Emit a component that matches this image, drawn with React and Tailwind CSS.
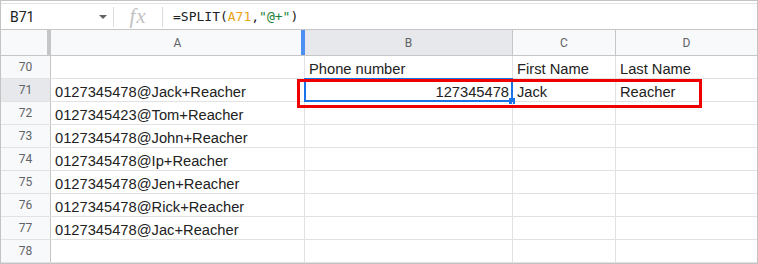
const rows = [
  { n: 70, a: '', b: 'Phone number', c: 'First Name', d: 'Last Name' },
  { n: 71, a: '0127345478@Jack+Reacher', b: '127345478', c: 'Jack', d: 'Reacher', active: true },
  { n: 72, a: '0127345423@Tom+Reacher' },
  { n: 73, a: '0127345478@John+Reacher' },
  { n: 74, a: '0127345478@Ip+Reacher' },
  { n: 75, a: '0127345478@Jen+Reacher' },
  { n: 76, a: '0127345478@Rick+Reacher' },
  { n: 77, a: '0127345478@Jac+Reacher' },
  { n: 78, a: '' },
];

const cellText = "text-[14.7px] text-[#222] font-['Liberation_Sans',Arial,sans-serif] leading-none whitespace-nowrap";

export default function App() {
  return (
    <div className="relative w-[758px] h-[264px] overflow-hidden border border-[#c3c3c3] bg-white">
      {/* Formula bar */}
      <div className="pt-[2px] border-b border-[#c4c7c5]">
        <div className="h-[26px] border-t border-[#e3e3e3] flex items-center font-['Roboto',sans-serif]">
          <div className="w-[112px] flex items-center pl-[9px] pr-[6px]">
            <span className="text-[14px] text-[#202124] leading-none">B71</span>
            <span className="ml-auto w-0 h-0 border-l-[4px] border-r-[4px] border-t-[4px] border-l-transparent border-r-transparent border-t-[#5f6368]" />
          </div>
          <div className="w-px h-[20px] bg-[#dadce0]" />
          <div className="w-[48px] flex justify-center">
            <span className="text-[21px] italic text-[#c2c2c2] leading-none font-['Liberation_Serif',serif] tracking-[1px]">fx</span>
          </div>
          <div className="w-px h-[20px] bg-[#dadce0]" />
          <div className="pl-[10px] text-[13px] leading-none text-[#202124] font-['DejaVu_Sans_Mono',monospace]">
            =SPLIT(<span className="text-[#e8a317]">A71</span>,<span className="text-[#188038]">"@+"</span>)
          </div>
        </div>
      </div>

      {/* Column headers */}
      <div className="flex h-[26px] border-b border-[#c4c7c5] bg-[#f8f9fa] text-[12px] text-[#5f6368] font-['Roboto',sans-serif]">
        <div className="w-[50px] flex justify-end">
          <div className="w-[4px] h-full bg-[#c4c7c5]" />
        </div>
        <div className="relative w-[254px] flex items-center justify-center border-r border-[#c4c7c5]">
          A
          <div className="absolute right-[-1px] top-0 w-[4px] h-full bg-[#4d8ef5]" />
        </div>
        <div className="w-[208px] flex items-center justify-center border-r border-[#c4c7c5] bg-[#e6e8eb]">B</div>
        <div className="w-[103px] flex items-center justify-center border-r border-[#c4c7c5]">C</div>
        <div className="flex-1 flex items-center justify-center">D</div>
      </div>

      {/* Grid rows */}
      {rows.map((r) => (
        <div key={r.n} className="flex h-[23px] border-b border-[#e2e2e3] last:border-b-0">
          <div
            className={`w-[50px] flex items-center justify-center border-r border-[#c4c7c5] text-[12px] text-[#5f6368] font-['Roboto',sans-serif] ${
              r.active ? 'bg-[#e6e8eb]' : 'bg-[#f8f9fa]'
            }`}
          >
            {r.n}
          </div>
          <div className={`w-[254px] flex items-end pb-[1px] pl-[4px] border-r border-[#e2e2e3] ${cellText}`}>{r.a}</div>
          <div
            className={`relative w-[208px] flex items-end pb-[1px] border-r border-[#e2e2e3] ${cellText} ${
              r.active ? 'justify-end pr-[3px]' : 'pl-[4px]'
            }`}
          >
            {r.b}
            {r.active && (
              <>
                <div className="absolute left-[-1px] top-[-1px] right-[-1px] bottom-[-1px] border-2 border-[#1a73e8]" />
                <div className="absolute right-[-3px] bottom-[-3px] w-[6px] h-[6px] bg-[#1a73e8]" />
              </>
            )}
          </div>
          <div className={`w-[103px] flex items-end pb-[1px] pl-[4px] border-r border-[#e2e2e3] ${cellText}`}>{r.c}</div>
          <div className={`flex-1 flex items-end pb-[1px] pl-[4px] ${cellText}`}>{r.d}</div>
        </div>
      ))}

      {/* Red annotation box */}
      <div className="absolute left-[296px] top-[78px] w-[405px] h-[29px] border-[3px] border-[#ee0000]" />
    </div>
  );
}
